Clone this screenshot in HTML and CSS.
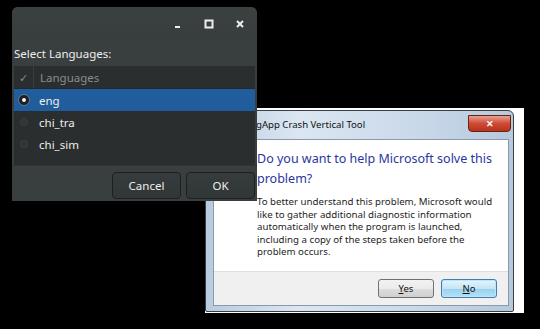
FILE: index.html
```html
<!DOCTYPE html>
<html lang="en">
<head>
  <meta charset="UTF-8">
  <title>Select Languages</title>
  <link rel="stylesheet" href="styles.css">
</head>
<body>
  <div class="desktop">

    <!-- Windows crash dialog, sits behind -->
    <div class="win-capture">
      <div class="win-frame">
        <div class="win-titlebar">
          <span class="win-title">gApp Crash Vertical Tool</span>
          <span class="win-close">&#x2715;</span>
        </div>
        <div class="win-panel">
          <div class="win-body">
            <h1 class="win-heading">Do you want to help Microsoft solve this problem?</h1>
            <p class="win-text">To better understand this problem, Microsoft would like to gather additional diagnostic information automatically when the program is launched, including a copy of the steps taken before the problem occurs.</p>
          </div>
          <div class="win-footer">
            <button class="win-btn"><u>Y</u>es</button>
            <button class="win-btn win-btn-default"><u>N</u>o</button>
          </div>
        </div>
      </div>
    </div>

    <!-- GTK dialog on top -->
    <div class="gtk-window">
      <div class="gtk-titlebar">
        <span class="gtk-icon">
          <svg width="10" height="10" viewBox="0 0 10 10"><rect x="2" y="7" width="5" height="2" fill="#eeeeec"/></svg>
        </span>
        <span class="gtk-icon">
          <svg width="10" height="10" viewBox="0 0 10 10"><rect x="1.5" y="1.5" width="7" height="7" fill="none" stroke="#eeeeec" stroke-width="2"/></svg>
        </span>
        <span class="gtk-icon">
          <svg width="10" height="10" viewBox="0 0 10 10"><path d="M2 2 L8 8 M8 2 L2 8" stroke="#eeeeec" stroke-width="2"/></svg>
        </span>
      </div>

      <div class="gtk-content">
        <div class="gtk-label">Select Languages:</div>
        <div class="tree">
          <div class="tree-header">
            <span class="col-check">&#x2713;</span>
            <span class="col-name">Languages</span>
          </div>
          <div class="tree-row selected">
            <span class="col-check"><span class="radio checked"></span></span>
            <span class="col-name">eng</span>
          </div>
          <div class="tree-row">
            <span class="col-check"><span class="radio"></span></span>
            <span class="col-name">chi_tra</span>
          </div>
          <div class="tree-row">
            <span class="col-check"><span class="radio"></span></span>
            <span class="col-name">chi_sim</span>
          </div>
        </div>
      </div>

      <div class="gtk-actions">
        <button class="gtk-btn">Cancel</button>
        <button class="gtk-btn">OK</button>
      </div>
    </div>

  </div>
</body>
</html>
```

FILE: styles.css
```css
* {
  margin: 0;
  padding: 0;
  box-sizing: border-box;
}

body {
  background: #000;
  width: 540px;
  height: 329px;
  overflow: hidden;
}

.desktop {
  position: relative;
  width: 540px;
  height: 329px;
}

/* ---------- GTK dialog ---------- */

.gtk-window {
  position: absolute;
  left: 12px;
  top: 7px;
  width: 245px;
  height: 194px;
  background: #393f3f;
  border-radius: 6px 6px 0 0;
  display: flex;
  flex-direction: column;
  font-family: "Noto Sans", "DejaVu Sans", sans-serif;
  color: #eeeeec;
}

.gtk-titlebar {
  height: 31px;
  display: flex;
  justify-content: flex-end;
  align-items: center;
  gap: 21px;
  padding: 2px 12px 0 0;
  background: linear-gradient(#3b4141, #383e3e);
  border-radius: 6px 6px 0 0;
}

.gtk-icon {
  width: 10px;
  height: 10px;
  display: flex;
}

.gtk-content {
  padding: 0 2px;
  flex: 1;
}

.gtk-label {
  height: 28px;
  display: flex;
  align-items: center;
  padding-top: 3px;
  font-size: 11.5px;
}

.tree {
  height: 99px;
  background: #2b2e2e;
}

.tree-header,
.tree-row {
  display: flex;
  align-items: center;
}

.tree-header {
  height: 23px;
  color: #8a8d8a;
  font-size: 11.5px;
  border-bottom: 1px solid #252828;
}

.tree-header .col-check {
  border-right: 1px solid #3a3e3e;
  height: 100%;
  color: #8a8d8a;
  font-size: 11px;
}

.tree-row {
  height: 22px;
  font-size: 11.5px;
}

.tree-row.selected {
  background: #215d9c;
}

.col-check {
  width: 20px;
  display: flex;
  align-items: center;
  justify-content: center;
}

.col-name {
  padding-left: 6px;
}

.tree-row .col-name {
  padding-left: 5px;
}

.radio {
  width: 12px;
  height: 12px;
  border-radius: 50%;
  background: #323636;
  border: 1px solid #272a2a;
  display: flex;
  align-items: center;
  justify-content: center;
}

.radio.checked {
  background: #1c1f1f;
  border-color: #5d7d9d;
}

.radio.checked::after {
  content: "";
  width: 4px;
  height: 4px;
  border-radius: 50%;
  background: #f4f4f4;
}

.gtk-actions {
  height: 36px;
  border-top: 1px solid #2f3434;
  display: flex;
  justify-content: flex-end;
  align-items: flex-start;
  gap: 5px;
  padding: 6px 2px 0 0;
}

.gtk-btn {
  width: 69px;
  height: 27px;
  background: linear-gradient(#363c3d, #313637);
  border: 1px solid #1d2020;
  border-radius: 4px;
  color: #eeeeec;
  font-family: "Noto Sans", "DejaVu Sans", sans-serif;
  font-size: 11.5px;
}

/* ---------- Windows dialog ---------- */

.win-capture {
  position: absolute;
  left: 205px;
  top: 108px;
  width: 319px;
  height: 205px;
  background: #fff;
}

.win-frame {
  width: 309px;
  height: 202px;
  margin-top: 2px;
  background: linear-gradient(90deg, #b9cbe0, #dbe6f2 30%, #c9d8e9 70%, #b5c8dd);
  border: 1px solid #3b3f44;
  border-radius: 6px 6px 2px 2px;
  display: flex;
  flex-direction: column;
  font-family: "Noto Sans", "Open Sans", sans-serif;
}

.win-titlebar {
  height: 28px;
  position: relative;
  display: flex;
  align-items: center;
  padding: 0 0 2px 50px;
}

.win-title {
  font-size: 9.6px;
  color: #111;
}

.win-close {
  position: absolute;
  right: 2px;
  top: 4px;
  width: 43px;
  height: 17px;
  background: linear-gradient(#e8a293, #cf4b34 50%, #b8321e);
  border: 1px solid #6b2016;
  border-radius: 0 0 4px 4px;
  color: #fff;
  font-size: 9px;
  font-weight: bold;
  display: flex;
  align-items: center;
  justify-content: center;
}

.win-panel {
  flex: 1;
  margin: 0 4px 5px 7px;
  border: 1px solid #8a9aab;
  background: #fff;
  display: flex;
  flex-direction: column;
}

.win-body {
  flex: 1;
  padding: 9px 8px 0 43px;
}

.win-heading {
  font-size: 12.5px;
  line-height: 20px;
  font-weight: normal;
  color: #2a369e;
  margin-bottom: 7px;
}

.win-text {
  font-size: 9.7px;
  line-height: 12.6px;
  color: #1e1e1e;
}

.win-footer {
  height: 34px;
  background: #f0f0f0;
  border-top: 1px solid #dfdfdf;
  display: flex;
  justify-content: flex-end;
  align-items: flex-start;
  gap: 7px;
  padding: 7px 11px 0 0;
}

.win-btn {
  width: 56px;
  height: 19px;
  background: linear-gradient(#f2f2f2, #ebebeb 50%, #dddddd 51%, #cfcfcf);
  border: 1px solid #707070;
  border-radius: 3px;
  font-family: "Noto Sans", "Open Sans", sans-serif;
  font-size: 9.5px;
  color: #111;
}

.win-btn-default {
  border-color: #3c7fb1;
  background: linear-gradient(#e5f4fc, #c4e5f6 50%, #98d1ef 51%, #b6e0f5);
  box-shadow: inset 0 0 0 1px #bfe3f7;
}
```
